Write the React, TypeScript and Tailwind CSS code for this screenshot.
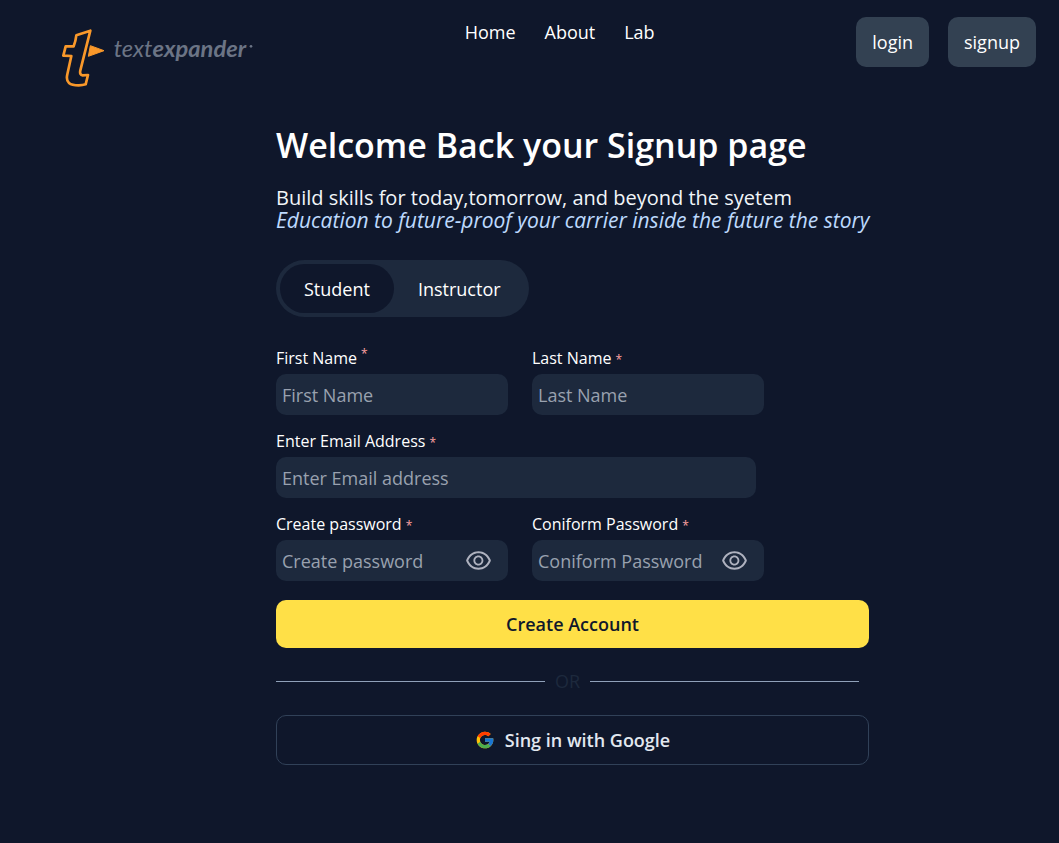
import { useState } from "react";
import type { ReactNode } from "react";
import { AiOutlineEye } from "react-icons/ai";
import { FcGoogle } from "react-icons/fc";

function Logo() {
  return (
    <a href="#" aria-label="textexpander" className="mt-3 block">
      <svg viewBox="36 42 603 177" className="h-[59px] w-[201px]">
        <path
          d="M121 47 L79 61 Q77 78 71 94 L47 94 L40 122 L64 123 L52 178 C46 203 60 211 86 211 Q98 211 107 208 L114 180 L98 181 Q88 180 91 166 Z"
          fill="none"
          stroke="#f9982a"
          strokeWidth="8"
          strokeLinejoin="round"
        />
        <path d="M121 92 L162 107 L115 124 Z" fill="#f9982a" stroke="#f9982a" strokeWidth="3" strokeLinejoin="round" />
        <text x="191" y="125" fontSize="71" fill="#6b7485" fontStyle="italic" fontFamily="Lato, sans-serif">
          text
          <tspan fontWeight="700">expander</tspan>
        </text>
        <circle cx="603" cy="94" r="4" fill="#6b7485" />
      </svg>
    </a>
  );
}

function Field({
  id,
  label,
  type = "text",
  placeholder,
  raised = false,
  wide = false,
  children,
}: {
  id: string;
  label: string;
  type?: string;
  placeholder: string;
  raised?: boolean;
  wide?: boolean;
  children?: ReactNode;
}) {
  return (
    <div className={wide ? "w-[480px]" : "w-[232px]"}>
      <label htmlFor={id} className="mb-1 flex h-6 gap-1 text-[16px] leading-6 text-white">
        {label}
        <span className={raised ? "text-[12px] leading-4 text-red-300" : "text-[12px] leading-7 text-red-300"}>*</span>
      </label>
      <div className="flex h-[41px] items-center rounded-[10px] bg-slate-800">
        <input
          id={id}
          type={type}
          placeholder={placeholder}
          className="h-full w-full min-w-0 bg-transparent pl-[6px] text-[18px] text-slate-50 outline-none placeholder:text-gray-400"
        />
        {children}
      </div>
    </div>
  );
}

function PasswordField({ id, label }: { id: string; label: string }) {
  const [shown, setShown] = useState(false);
  return (
    <Field id={id} label={label} placeholder={label} type={shown ? "text" : "password"}>
      <button type="button" aria-label="Show password" onClick={() => setShown(!shown)} className="mr-[15px] shrink-0">
        <AiOutlineEye className="size-[29px] text-[#afb2bf]" />
      </button>
    </Field>
  );
}

export default function App() {
  const [role, setRole] = useState("Student");
  return (
    <div className="min-h-screen bg-slate-900 font-['Open_Sans',sans-serif] text-[18px] leading-7 text-white">
      <header className="flex items-start justify-between pt-[17px] pr-[23px] pl-[62px]">
        <Logo />
        <nav className="flex gap-[29px] pt-[1px]">
          <a href="#">Home</a>
          <a href="#">About</a>
          <a href="#">Lab</a>
        </nav>
        <div className="flex gap-[19px]">
          <button type="button" className="h-[50px] rounded-[10px] bg-[#334152] px-4">login</button>
          <button type="button" className="h-[50px] rounded-[10px] bg-[#334152] px-4">signup</button>
        </div>
      </header>

      <main className="flex justify-center pt-[37px] pb-10 pl-[86px]">
        <div className="w-full max-w-[593px]">
          <h1 className="text-[34px] leading-10 font-semibold whitespace-nowrap">Welcome Back your Signup page</h1>
          <div className="mt-[22px] leading-[22px] whitespace-nowrap">
            <p className="text-[20px] text-slate-100">Build skills for today,tomorrow, and beyond the syetem</p>
            <p className="text-[21px] text-blue-200 italic">
              Education to future-proof your carrier inside the future the story
            </p>
          </div>

          <div className="mt-[29px] flex w-max rounded-full bg-slate-800 p-1">
            {["Student", "Instructor"].map((name) => (
              <button
                key={name}
                type="button"
                aria-pressed={role === name}
                onClick={() => setRole(name)}
                className={role === name ? "h-[49px] rounded-full bg-slate-900 px-6" : "h-[49px] rounded-full px-6"}
              >
                {name}
              </button>
            ))}
          </div>

          <form className="mt-[29px]" onSubmit={(e) => e.preventDefault()}>
            <div className="flex flex-col gap-[14px]">
              <div className="flex gap-6">
                <Field id="first" label="First Name" placeholder="First Name" raised />
                <Field id="last" label="Last Name" placeholder="Last Name" />
              </div>
              <Field id="email" label="Enter Email Address" placeholder="Enter Email address" type="email" wide />
              <div className="flex gap-6">
                <PasswordField id="create" label="Create password" />
                <PasswordField id="confirm" label="Coniform Password" />
              </div>
            </div>
            <button type="submit" className="mt-[19px] h-12 w-full rounded-[10px] bg-[#ffe047] font-semibold text-slate-900">
              Create Account
            </button>
          </form>

          <div className="mt-[19px] flex items-center gap-[10px] pr-[10px] text-slate-800">
            <div className="h-px flex-1 bg-slate-400" />
            <p>OR</p>
            <div className="h-px flex-1 bg-slate-400" />
          </div>

          <button
            type="button"
            className="mt-5 flex h-[50px] w-full items-center justify-center gap-[10px] rounded-[10px] border border-slate-700 font-semibold text-slate-200"
          >
            <FcGoogle className="size-5" />
            Sing in with Google
          </button>
        </div>
      </main>
    </div>
  );
}
